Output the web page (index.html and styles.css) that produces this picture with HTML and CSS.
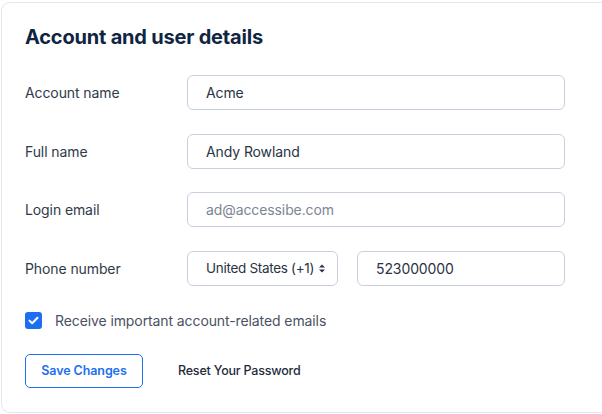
FILE: index.html
```html
<!DOCTYPE html>
<html lang="en">
<head>
    <meta charset="UTF-8">
    <meta name="viewport" content="width=device-width, initial-scale=1.0">
    <title>Account and user details</title>
    <link rel="stylesheet" href="styles.css">
</head>
<body>
    <div class="account-card">
        <h2 class="account-title">Account and user details</h2>

        <div class="field-grid">
            <label class="field-label">Account name</label>
            <input type="text" class="field-input" value="Acme">

            <label class="field-label">Full name</label>
            <input type="text" class="field-input" value="Andy Rowland">

            <label class="field-label">Login email</label>
            <input type="text" class="field-input field-muted" value="ad@accessibe.com" disabled>

            <label class="field-label">Phone number</label>
            <div class="phone-row">
                <div class="country-select">
                    <span>United States (+1)</span>
                    <svg class="select-arrows" width="8" height="11" viewBox="0 0 8 11">
                        <path d="M1 4.5 L4 1.5 L7 4.5 Z" fill="#2a3342"/>
                        <path d="M1 6.5 L4 9.5 L7 6.5 Z" fill="#2a3342"/>
                    </svg>
                </div>
                <input type="text" class="field-input" value="523000000">
            </div>
        </div>

        <label class="check-row">
            <span class="check-box">
                <svg width="11" height="9" viewBox="0 0 11 9">
                    <path d="M1.5 4.6 L4.2 7.2 L9.5 1.8" fill="none" stroke="#fff" stroke-width="2" stroke-linecap="round" stroke-linejoin="round"/>
                </svg>
            </span>
            Receive important account-related emails
        </label>

        <div class="action-row">
            <button class="save-btn">Save Changes</button>
            <button class="link-btn">Reset Your Password</button>
        </div>
    </div>
</body>
</html>
```

FILE: styles.css
```css
body {
    background: #fff;
    color: #2a3342;
    font-family: Inter, "Open Sans", sans-serif;
    margin: 0;
    padding: 2px 0 0 1px;
}

.account-card {
    width: 601px;
    border: 1px solid #e7e5f0;
    border-right: none;
    border-radius: 9px 0 0 9px;
    padding: 20px 0 24px 23px;
    box-sizing: border-box;
}

.account-title {
    color: #0f2542;
    font-size: 20px;
    font-weight: 700;
    letter-spacing: -0.2px;
    margin: 0 0 24px 0;
    line-height: 28px;
}

.field-grid {
    display: grid;
    grid-template-columns: 162px 378px;
    row-gap: 23.5px;
    align-items: center;
}

.field-label {
    font-size: 14px;
    color: #2f3a4a;
    letter-spacing: -0.1px;
}

.field-input {
    height: 35px;
    box-sizing: border-box;
    border: 1px solid #c8cfdf;
    border-radius: 6px;
    padding: 0 18px;
    font-family: inherit;
    font-size: 14px;
    letter-spacing: -0.1px;
    color: #2a3342;
    background: #fff;
    width: 100%;
    outline: none;
}

.field-muted {
    color: #7d8593;
}

.phone-row {
    display: flex;
    gap: 19px;
}

.phone-row .field-input {
    flex: 1;
}

.country-select {
    width: 151px;
    height: 35px;
    box-sizing: border-box;
    border: 1px solid #c8cfdf;
    border-radius: 6px;
    padding: 0 11px 0 18px;
    display: flex;
    align-items: center;
    justify-content: space-between;
    font-size: 13.5px;
    letter-spacing: -0.3px;
    white-space: nowrap;
    flex-shrink: 0;
}

.check-row {
    display: flex;
    align-items: center;
    gap: 13px;
    margin-top: 26px;
    font-size: 14px;
    letter-spacing: -0.1px;
    color: #4a5262;
}

.check-box {
    width: 17px;
    height: 17px;
    border-radius: 3px;
    background: #1d6ff2;
    display: flex;
    align-items: center;
    justify-content: center;
}

.action-row {
    display: flex;
    align-items: center;
    gap: 35px;
    margin-top: 25px;
}

.save-btn {
    width: 118px;
    height: 34px;
    background: #fff;
    border: 1px solid #1d6ff2;
    border-radius: 5px;
    color: #1d6ff2;
    font-family: inherit;
    font-size: 12.5px;
    font-weight: 600;
    letter-spacing: -0.1px;
    cursor: pointer;
    padding: 0;
}

.link-btn {
    background: transparent;
    border: none;
    color: #1f2a3a;
    font-family: inherit;
    font-size: 12.5px;
    font-weight: 500;
    letter-spacing: -0.2px;
    cursor: pointer;
    padding: 0;
}
```
